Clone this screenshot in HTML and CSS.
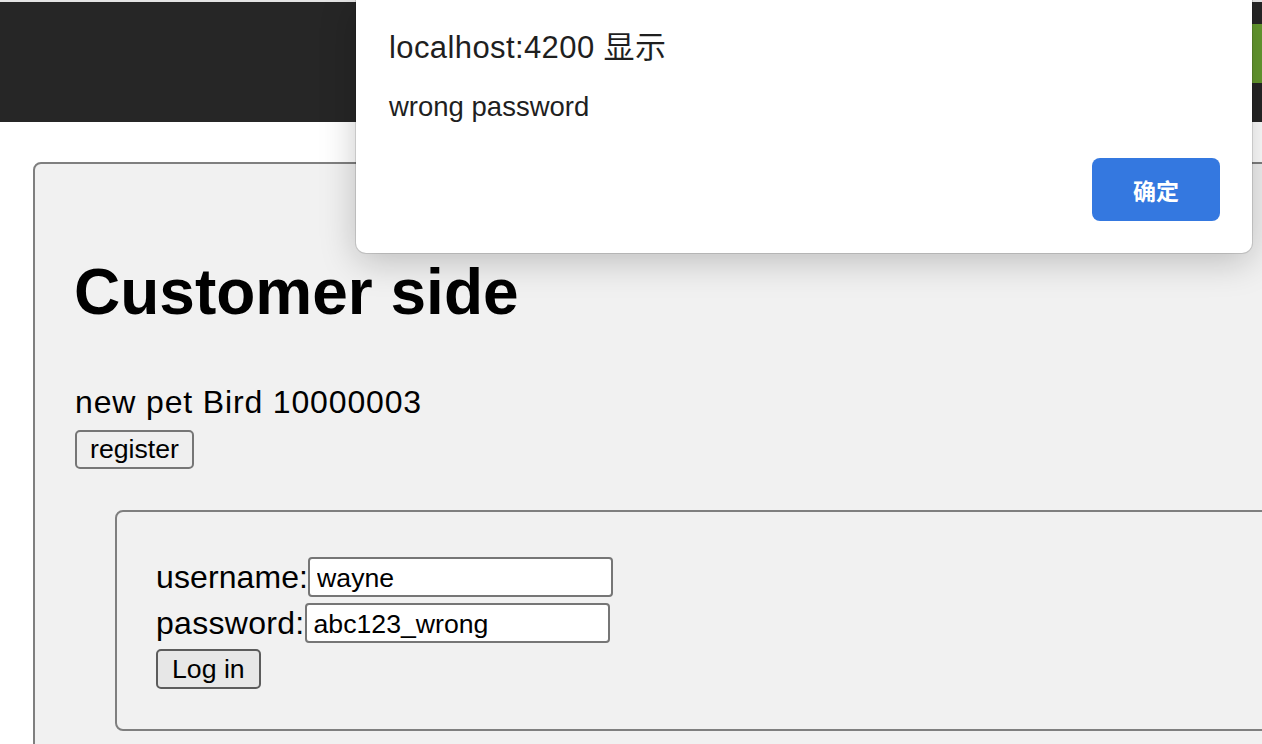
FILE: index.html
```html
<!DOCTYPE html>
<html lang="en">
<head>
<meta charset="utf-8">
<title>Customer side</title>
<link rel="stylesheet" href="styles.css">
</head>
<body>
<header class="topbar">
  <div class="topbar-accent"></div>
</header>
<main class="page">
  <section class="panel">
    <h1 class="panel-title">Customer side</h1>
    <div class="pet-line">new pet Bird 10000003</div>
    <button class="btn btn-register" type="button">register</button>
    <form class="login-box">
      <div class="field-row">
        <label class="field-label" for="username">username:</label>
        <input class="field-input" id="username" type="text" value="wayne">
      </div>
      <div class="field-row">
        <label class="field-label field-label-wide" for="password">password:</label>
        <input class="field-input" id="password" type="text" value="abc123_wrong">
      </div>
      <div class="field-row">
        <button class="btn btn-login" type="button">Log in</button>
      </div>
    </form>
  </section>
</main>
<div class="alert-dialog" role="alertdialog">
  <div class="alert-title">localhost:4200 显示</div>
  <div class="alert-message">wrong password</div>
  <div class="alert-actions">
    <button class="alert-ok" type="button">确定</button>
  </div>
</div>
</body>
</html>
```
FILE: styles.css
```css
html, body {
  margin: 0;
  padding: 0;
  overflow: hidden;
  height: 744px;
}
body {
  background: #ffffff;
  font-family: "Liberation Sans", Arial, "Noto Sans CJK SC", sans-serif;
  color: #000;
}

.topbar {
  height: 120px;
  border-top: 2px solid #e4e4e4;
  background: #262626;
  display: flex;
  justify-content: flex-end;
  align-items: flex-start;
}
.topbar-accent {
  width: 40px;
  height: 59px;
  margin-top: 22px;
  background: #659a2f;
}

.page {
  padding: 40px 0 0 33px;
}
.panel {
  width: 1400px;
  height: 700px;
  box-sizing: border-box;
  border: 2px solid #7f7f7f;
  border-radius: 8px;
  background: #f1f1f1;
  padding: 48px 0 0 40px;
  display: flex;
  flex-direction: column;
  align-items: flex-start;
}
.panel-title {
  font-size: 64px;
  font-weight: bold;
  line-height: 74px;
  margin: 43px 0 55px -1px;
}
.pet-line {
  font-size: 32px;
  line-height: 37px;
  letter-spacing: 0.85px;
}
.btn {
  font-family: "Liberation Sans", Arial, sans-serif;
  font-size: 26.67px;
  color: #000;
  border-radius: 5px;
  padding: 2px 13px;
  height: 39px;
  box-sizing: border-box;
  line-height: 31px;
}
.btn-register {
  margin-top: 9px;
  background: #efefef;
  border: 2px solid #767676;
}
.login-box {
  margin: 41px 0 0 40px;
  width: 1400px;
  box-sizing: border-box;
  border: 2px solid #7f7f7f;
  border-radius: 8px;
  padding: 42px 0 37px 39px;
}
.field-row {
  height: 46px;
  display: flex;
  align-items: center;
}
.field-label {
  font-size: 32px;
  line-height: 40px;
  letter-spacing: 0.1px;
}
.field-label-wide {
  letter-spacing: 0.3px;
}
.field-input {
  font-family: "Liberation Sans", Arial, sans-serif;
  font-size: 26.67px;
  width: 305px;
  height: 40px;
  box-sizing: border-box;
  padding: 2px 6px 0 7px;
  border: 2px solid #767676;
  border-radius: 4px;
  background: #fff;
  color: #000;
  margin-left: 0;
}
.btn-login {
  background: #e7e7e7;
  border: 2px solid #5c5c5c;
  height: 40px;
  padding: 2px 14px;
}

.alert-dialog {
  position: absolute;
  top: 0;
  left: 356px;
  width: 896px;
  height: 253px;
  box-sizing: border-box;
  background: #fff;
  border-radius: 0 0 10px 10px;
  box-shadow: 0 0 0 1px rgba(0, 0, 0, 0.12), 0 8px 36px rgba(0, 0, 0, 0.22);
  padding: 30px 32px 32px 33px;
  display: flex;
  flex-direction: column;
  font-family: "Liberation Sans", Arial, "Noto Sans CJK SC", sans-serif;
  color: #1f1f1f;
}
.alert-title {
  font-size: 31px;
  line-height: 36px;
  letter-spacing: 0.4px;
}
.alert-message {
  font-size: 27.5px;
  line-height: 32px;
  margin-top: 25px;
}
.alert-actions {
  margin-top: auto;
  display: flex;
  justify-content: flex-end;
}
.alert-ok {
  width: 128px;
  height: 63px;
  border: none;
  border-radius: 8px;
  background: #3478e0;
  color: #fff;
  font-family: "Noto Sans CJK SC", sans-serif;
  font-weight: bold;
  font-size: 23px;
}
```
